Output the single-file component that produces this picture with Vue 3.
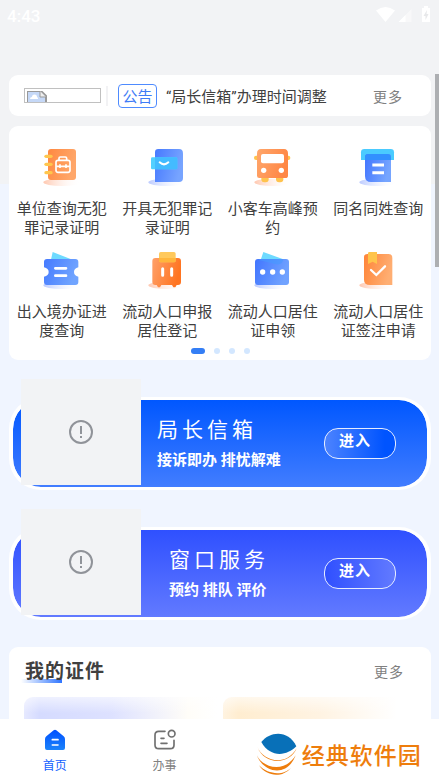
<template>
  <div class="page">
    <header class="status-bar">
      <span class="time">4:43</span>
      <svg class="status-icons" viewBox="0 0 56 18" aria-hidden="true">
        <path d="M0 4.500Q9.500 -2.500 19 4.500L9.500 16Z" fill="#fff" />
        <path d="M35.500 3V16H22.500Z" fill="#fff" opacity="0.45" />
        <path d="M29.500 9V16H22.500Z" fill="#fff" />
        <path d="M46 2h2V0h4v2h2v14h-8Z" fill="#fff" />
        <path d="M51 4l-3.500 6h2v4l3-6h-2Z" fill="#e7e8ea" />
      </svg>
    </header>

    <main class="content">
      <section class="card notice">
        <span class="broken-image">
          <svg viewBox="0 0 20 12" aria-hidden="true">
            <path d="M0 0H14L19 5V12H0Z" fill="#c5d8f7" />
            <path d="M0 12V0H14L19 5V12" fill="none" stroke="#999" stroke-width="2" />
            <path d="M13 0V6H19" fill="#eee" stroke="#999" />
            <path d="M3 8a2 2 0 0 1 2-2a2.500 2.500 0 0 1 5 0a2 2 0 0 1 1 2Z" fill="#fff" />
          </svg>
        </span>
        <span class="divider"></span>
        <span class="tag">公告</span>
        <span class="notice-text">“局长信箱”办理时间调整</span>
        <a href="#" class="more">更多</a>
      </section>

      <section class="card services">
        <div class="service-grid">
          <a v-for="item in services" :key="item.icon" href="#" class="service">
            <svg class="service-icon" viewBox="0 0 126 126" aria-hidden="true">
              <defs>
                <linearGradient :id="'shade-' + item.icon">
                  <stop offset="0" :stop-color="item.warm ? '#ffc8b0' : '#bccbff'" />
                  <stop offset="1" stop-color="#fff" stop-opacity="0" />
                </linearGradient>
                <linearGradient :id="'fill-' + item.icon" x1="0" y1="0" x2="1" y2="0.300">
                  <stop offset="0" :stop-color="item.colors[0]" />
                  <stop offset="1" :stop-color="item.colors[1]" />
                </linearGradient>
              </defs>
              <ellipse cx="63" cy="109" rx="56" ry="11" :fill="`url(#shade-${item.icon})`" />

              <g v-if="item.icon === 'book'">
                <rect x="21" y="9" width="84" height="93" rx="9" fill="url(#fill-book)" />
                <g fill="#ffc64d">
                  <rect x="10" y="26" width="25" height="10" rx="5" />
                  <rect x="10" y="50" width="25" height="10" rx="5" />
                  <rect x="10" y="75" width="25" height="10" rx="5" />
                </g>
                <g fill="none" stroke="#fff" stroke-width="5">
                  <rect x="45" y="43" width="42" height="36" rx="6" />
                  <path d="M54 42V37Q54 33 58 33H73Q77 33 77 37V42M46 61H86M57 55V66M75 55V66" />
                </g>
              </g>

              <g v-else-if="item.icon === 'folder'">
                <path d="M37 9H99Q111 9 111 22V96Q111 108 99 108H27V19Q27 9 37 9Z" fill="url(#fill-folder)" />
                <rect x="15" y="34" width="79" height="36" rx="4" fill="#52d0ff" />
                <path d="M27 34H90Q94 34 94 38V66Q94 70 90 70H27Z" fill="#43bbff" />
                <path d="M41 49Q54 61 67 49" fill="none" stroke="#fff" stroke-width="6" stroke-linecap="round" />
              </g>

              <g v-else-if="item.icon === 'bus'">
                <g fill="#ffc34d">
                  <rect x="6" y="29" width="20" height="13" rx="6" />
                  <rect x="97" y="29" width="18" height="13" rx="6" />
                  <rect x="28" y="86" width="22" height="23" rx="9" />
                  <rect x="72" y="86" width="22" height="23" rx="9" />
                </g>
                <path d="M27 9H96Q108 9 108 23V89Q108 96 100 96H22Q15 96 15 89V23Q15 9 27 9Z" fill="url(#fill-bus)" />
                <rect x="27" y="24" width="69" height="28" rx="6" fill="#fff" />
                <circle cx="35" cy="73" r="8" fill="#fff" />
                <circle cx="88" cy="73" r="8" fill="#fff" />
              </g>

              <g v-else-if="item.icon === 'scroll'">
                <path d="M22 9H101Q111 9 111 19V42H12V19Q12 9 22 9Z" fill="#4acbff" />
                <path d="M34 24H93Q102 24 102 34V108H42Q24 108 24 90V34Q24 24 34 24Z" fill="url(#fill-scroll)" />
                <path d="M34 24H93Q102 24 102 34V42H24V34Q24 24 34 24Z" fill="#3290ff" />
                <path d="M46 57H81M46 80H81" stroke="#fff" stroke-width="9" />
              </g>

              <g v-else-if="item.icon === 'ticket'">
                <path d="M35 9L104 36L98 46H27Z" fill="#6edaff" />
                <path d="M18 30H103Q112 30 112 39V55Q99 58 99 69T112 83V99Q112 108 103 108H18Q9 108 9 99V83Q23 80 23 69T9 55V39Q9 30 18 30Z" fill="url(#fill-ticket)" />
                <path d="M43 58H75M43 80H75" stroke="#fff" stroke-width="8" stroke-linecap="round" />
              </g>

              <g v-else-if="item.icon === 'luggage'">
                <path d="M28 27H96Q105 27 105 36V99Q105 108 96 108H92L88 115H82L78 108H46L42 115H36L32 108H28Q19 108 19 99V36Q19 27 28 27Z" fill="url(#fill-luggage)" />
                <rect x="39" y="9" width="50" height="31" rx="5" fill="#ffc95c" />
                <path d="M39 27H89V35Q89 40 84 40H44Q39 40 39 35Z" fill="#ffb63c" />
                <path d="M50 59V79M77 59V79" stroke="#fff" stroke-width="9" stroke-linecap="round" />
              </g>

              <g v-else-if="item.icon === 'wallet'">
                <path d="M34 9L94 31L90 42H23Z" fill="#6edaff" />
                <rect x="9" y="30" width="102" height="78" rx="9" fill="url(#fill-wallet)" />
                <path d="M23 30H91L94 31Q92 49 72 46L20 33Z" fill="#4699ff" opacity="0.600" />
                <g fill="#fff">
                  <circle cx="32" cy="69" r="8" />
                  <circle cx="62" cy="69" r="8" />
                  <circle cx="91" cy="69" r="8" />
                </g>
              </g>

              <g v-else>
                <path d="M31 15H95Q106 15 106 27V108H39Q21 108 21 92V25Q21 15 31 15Z" fill="url(#fill-bookmark)" />
                <path d="M37 9H60V45L47 38L33 45V13Q33 9 37 9Z" fill="#ffc44b" />
                <path d="M42 63L58 78L84 52" fill="none" stroke="#fff" stroke-width="7" stroke-linecap="round" />
              </g>
            </svg>
            <span class="service-label">{{ item.label }}</span>
          </a>
        </div>
        <div class="dots">
          <span class="dot active"></span>
          <span class="dot"></span>
          <span class="dot"></span>
          <span class="dot"></span>
        </div>
      </section>

      <section v-for="banner in banners" :key="banner.title" class="banner" :class="banner.theme">
        <div class="placeholder">
          <svg viewBox="0 0 24 24" aria-hidden="true">
            <circle cx="12" cy="12" r="11" fill="none" stroke="#909399" stroke-width="2" />
            <path d="M12 6V14M12 16V18" stroke="#909399" stroke-width="2" />
          </svg>
        </div>
        <div class="banner-text">
          <h2>{{ banner.title }}</h2>
          <p>{{ banner.desc }}</p>
        </div>
        <button type="button" class="enter">进入</button>
      </section>

      <section class="card certs">
        <div class="certs-head">
          <h3>我的证件</h3>
          <a href="#" class="more">更多</a>
        </div>
        <div class="cert-list">
          <div class="cert blue"></div>
          <div class="cert gold"></div>
        </div>
      </section>
    </main>

    <div class="scroll-thumb"></div>

    <nav class="tab-bar">
      <a href="#" class="tab active">
        <svg viewBox="0 0 66 66" aria-hidden="true">
          <defs>
            <linearGradient id="home" x1="0" y1="0" x2="0" y2="1">
              <stop offset="0" stop-color="#0050ff" />
              <stop offset="1" stop-color="#1c83fa" />
            </linearGradient>
          </defs>
          <path d="M29 4Q33 1 37 4L59 22Q63 25 63 30V57Q63 63 57 63H9Q3 63 3 57V30Q3 25 7 22Z" fill="url(#home)" />
          <path d="M25 32H42M25 48H42" stroke="#fff" stroke-width="5" stroke-linecap="round" />
        </svg>
        <span>首页</span>
      </a>
      <a href="#" class="tab">
        <svg viewBox="0 0 66 66" aria-hidden="true">
          <g fill="none" stroke="#707070" stroke-width="5" stroke-linecap="round">
            <path d="M33 7H14Q3 7 3 18V48Q3 59 14 59H49Q60 59 60 48V34" />
            <circle cx="53" cy="14" r="10" />
            <path d="M21 28H30M21 43H39" />
          </g>
        </svg>
        <span>办事</span>
      </a>
      <div class="brand">
        <svg viewBox="0 0 126 126" aria-hidden="true">
          <path d="M16 27C42 -6 98 -10 121 40C91 71 42 74 16 27Z" fill="#0870b8" />
          <g fill="#ee7d0c">
            <path d="M4 42C20 81 87 106 122 46C105 92 28 102 4 42Z" />
            <path d="M2 66C21 107 88 120 119 67C94 134 23 121 2 66Z" />
            <path d="M9 97C37 127 85 127 105 104C80 135 32 132 9 97Z" />
          </g>
        </svg>
        <span>经典软件园</span>
      </div>
    </nav>
  </div>
</template>

<script setup>
const services = [
  { icon: 'book', label: '单位查询无犯罪记录证明', warm: true, colors: ['#ff8840', '#ffa76a'] },
  { icon: 'folder', label: '开具无犯罪记录证明', warm: false, colors: ['#4679ff', '#77a4ff'] },
  { icon: 'bus', label: '小客车高峰预约', warm: true, colors: ['#ffa76c', '#ff8745'] },
  { icon: 'scroll', label: '同名同姓查询', warm: false, colors: ['#4174ff', '#76a5ff'] },
  { icon: 'ticket', label: '出入境办证进度查询', warm: false, colors: ['#457aff', '#70a4ff'] },
  { icon: 'luggage', label: '流动人口申报居住登记', warm: true, colors: ['#ffa16a', '#ff7420'] },
  { icon: 'wallet', label: '流动人口居住证申领', warm: false, colors: ['#4175ff', '#70a2ff'] },
  { icon: 'bookmark', label: '流动人口居住证签注申请', warm: true, colors: ['#ff8437', '#ffae72'] }
]

const banners = [
  { title: '局长信箱', desc: '接诉即办 排忧解难', theme: 'mailbox' },
  { title: '窗口服务', desc: '预约 排队 评价', theme: 'window' }
]
</script>

<style>
body {
  margin: 0;
}
</style>

<style scoped>
.page {
  position: relative;
  display: flex;
  flex-direction: column;
  height: 100vh;
  overflow: hidden;
  background: linear-gradient(#f2f3f5 184px, #f0f5ff 184px);
  font-family: Roboto, "Noto Sans CJK SC", sans-serif;
  color: #404040;
}

a {
  color: inherit;
  text-decoration: none;
}

h2,
h3,
p {
  margin: 0;
}

.status-bar {
  flex: none;
  box-sizing: border-box;
  display: flex;
  justify-content: space-between;
  height: 75px;
  padding: 6px 7px 0;
  color: #fff;
}

.time {
  font-size: 17px;
  font-weight: 500;
  line-height: 20px;
}

.status-icons {
  width: 56px;
  height: 18px;
}

.content {
  flex: 1;
  min-height: 0;
  overflow: hidden;
  padding: 0 8px 0 9px;
}

.card {
  background: #fff;
  border-radius: 9px;
}

.notice {
  display: flex;
  align-items: center;
  height: 41px;
  padding: 0 28px 0 15px;
}

.broken-image {
  box-sizing: border-box;
  width: 77px;
  height: 15px;
  padding: 2px;
  border: 1px solid #c0c0c0;
  overflow: hidden;
}

.broken-image svg {
  display: block;
  width: 20px;
  height: 12px;
}

.divider {
  width: 2px;
  height: 20px;
  margin: 0 10px 0 5px;
  background: #f2f2f4;
}

.tag {
  box-sizing: border-box;
  width: 39px;
  height: 24px;
  border: 1px solid #4e8bff;
  border-radius: 4px;
  color: #3f7cf6;
  font-size: 15px;
  line-height: 24px;
  text-align: center;
}

.notice-text {
  flex: 1;
  margin-left: 9px;
  font-size: 15px;
  white-space: nowrap;
}

.more {
  color: #808080;
  font-size: 14px;
  letter-spacing: 1px;
}

.services {
  margin-top: 10px;
  padding: 20px 0 6px;
}

.service-grid {
  display: grid;
  grid-template-columns: repeat(4, 1fr);
  row-gap: 11px;
}

.service {
  display: flex;
  flex-direction: column;
  align-items: center;
  gap: 12px;
}

.service-icon {
  width: 42px;
  height: 42px;
}

.service-label {
  width: 90px;
  min-height: 38px;
  font-size: 15px;
  line-height: 19px;
  text-align: center;
}

.dots {
  display: flex;
  justify-content: center;
  gap: 9px;
  margin-top: 7px;
}

.dot {
  width: 6px;
  height: 6px;
  border-radius: 3px;
  background: #d3e7ff;
}

.dot.active {
  width: 14px;
  background: #347ef5;
}

.banner {
  position: relative;
  box-sizing: border-box;
  display: flex;
  align-items: center;
  justify-content: space-between;
  height: 93px;
  margin-top: 37px;
  padding: 0 31px 0 144px;
  border: solid #fff;
  border-width: 3px 4px;
  border-radius: 32px;
  background-clip: padding-box;
  color: #fff;
}

.mailbox {
  background-image: linear-gradient(#0057ff, #427dff);
}

.window {
  padding-left: 156px;
  background-image: linear-gradient(#2f50ff, #627aff);
}

.placeholder {
  position: absolute;
  top: -21px;
  left: 8px;
  display: flex;
  align-items: center;
  justify-content: center;
  width: 120px;
  height: 106px;
  background: #f2f3f5;
}

.placeholder svg {
  width: 24px;
  height: 24px;
}

.banner-text {
  padding-top: 2px;
}

.banner-text h2 {
  font-size: 21px;
  font-weight: 400;
  line-height: 30px;
  letter-spacing: 4px;
}

.banner-text p {
  font-size: 15px;
  font-weight: 700;
  line-height: 30px;
}

.enter {
  width: 72px;
  height: 31px;
  padding: 0 10px 8px 0;
  border: 1px solid #e6edff;
  border-radius: 14px;
  color: #fff;
  font-family: inherit;
  font-size: 15px;
  font-weight: 700;
  letter-spacing: 1px;
}

.mailbox .enter {
  background: linear-gradient(90deg, #4c83ff, #0054ff 85%);
}

.window .enter {
  background: linear-gradient(90deg, #3050ff, #627aff);
}

.certs {
  height: 180px;
  margin-top: 27px;
  padding: 10px 15px 0;
}

.certs-head {
  display: flex;
  align-items: center;
  justify-content: space-between;
  height: 28px;
  padding-right: 12px;
}

.certs-head h3 {
  position: relative;
  z-index: 0;
  padding: 2px 0 0 1px;
  font-size: 19px;
  font-weight: 700;
  line-height: 28px;
  letter-spacing: 1px;
}

.certs-head h3::before {
  content: "";
  position: absolute;
  z-index: -1;
  left: -3px;
  bottom: 3px;
  width: 41px;
  height: 4px;
  background: linear-gradient(90deg, #fff, #2f75ff);
}

.cert-list {
  display: grid;
  grid-template-columns: 1fr 1fr;
  gap: 6px;
  margin-top: 12px;
}

.cert {
  height: 100px;
  border-radius: 9px 0 0 9px;
}

.blue {
  background: linear-gradient(#fff9, #fff0 16px), linear-gradient(90deg, #e6e9ff, #d5dbff 8%, #dde1ff 45%, #fffdf8 85%, #fff);
}

.gold {
  background: linear-gradient(#fff9, #fff0 16px), linear-gradient(90deg, #fff3e0, #ffedd0 8%, #fff3e2 50%, #fff 90%);
}

.scroll-thumb {
  position: absolute;
  top: 74px;
  right: 0;
  width: 4px;
  height: 193px;
  background: #adafb2;
}

.tab-bar {
  flex: none;
  display: grid;
  grid-template-columns: 1fr 1fr 2fr;
  height: 61px;
  background: #fff;
}

.tab {
  display: flex;
  flex-direction: column;
  align-items: center;
  gap: 6px;
  padding-top: 10px;
  color: #808080;
  font-size: 12px;
  line-height: 18px;
}

.tab svg {
  width: 22px;
  height: 22px;
}

.tab.active {
  color: #1260ff;
}

.brand {
  display: flex;
  align-items: center;
  justify-content: center;
  gap: 4px;
  padding-top: 8px;
  padding-left: 19px;
  color: #ee7d0c;
  font-size: 23px;
  font-weight: 500;
  letter-spacing: 1px;
  white-space: nowrap;
}

.brand svg {
  flex: none;
  width: 42px;
  height: 42px;
}
</style>
